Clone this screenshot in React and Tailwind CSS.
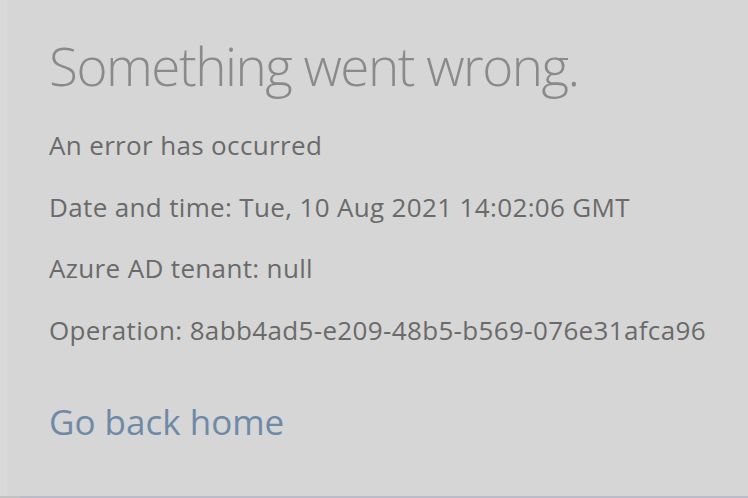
const FONT = '"Open Sans", "Noto Sans", "Liberation Sans", sans-serif';

const details = [
  'An error has occurred',
  'Date and time: Tue, 10 Aug 2021 14:02:06 GMT',
  'Azure AD tenant: null',
  'Operation: 8abb4ad5-e209-48b5-b569-076e31afca96',
];

export default function App() {
  return (
    <div className="w-[748px] h-[498px] bg-[#d6d6d6] flex flex-col overflow-hidden" style={{ fontFamily: FONT }}>
      <div className="flex flex-1">
        <div className="w-[7px] bg-[#dadada]" />
        <div className="flex-1 pl-[42px] pt-[34px] flex flex-col">
          <h1 className="text-[53px] leading-[64px] font-light text-[#8a8a8a] tracking-[-1.5px] whitespace-nowrap">
            Something went wrong.
          </h1>
          <div className="mt-[30px] flex flex-col gap-[27.6px]">
            {details.map((line) => (
              <p key={line} className="text-[26px] leading-[34px] text-[#6a6a6a] tracking-[0.35px] whitespace-nowrap">
                {line}
              </p>
            ))}
          </div>
          <a href="#" className="mt-[53px] text-[35px] leading-[44px] text-[#6e8aa6] self-start">
            Go back home
          </a>
        </div>
      </div>
      <div className="h-[2px] flex">
        <div className="w-[20px] bg-[#c2c2c2]" />
        <div className="flex-1 bg-[#bcbcc8]" />
      </div>
    </div>
  );
}
